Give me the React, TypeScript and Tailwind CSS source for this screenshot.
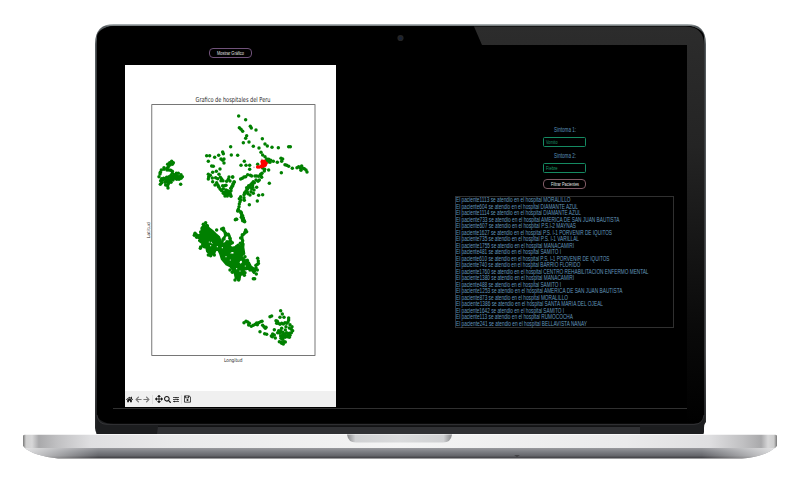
import React from "react";
import { FaHome, FaArrowLeft, FaArrowRight, FaArrowsAlt, FaSearch, FaSlidersH } from "react-icons/fa";
import { FaRegFloppyDisk } from "react-icons/fa6";

const northWest = "257,140 185,167 194,167 190,184 209,172 221,166 233,156 235,161 228,177 237,177 233,181 237,189 200,198 205,199 225,207 203,217 214,214 222,223 190,223 191,231 190,237 196,226 202,234 203,245 212,233 218,236 226,232 230,237 228,242 234,242 215,248 210,255 218,254 222,262 220,258 226,268 230,272 235,266 233,257 243,256 239,257 245,244 250,238 252,231 263,231 255,243 268,246 265,252 263,258 258,265 258,272 254,275 248,272 243,270 238,277 235,280 240,283 245,286 250,280 255,280 240,288 258,289 247,288 243,277 249,283 68,193 74,188 80,184 85,188 82,193 75,195 70,200 66,205 57,203 57,208 49,210 46,217 45,222 42,230 50,236 47,242 53,241 46,253 50,248 60,238 56,235 60,247 62,255 68,257 69,264 66,246 72,245 70,238 65,232 72,230 78,226 82,230 88,230 78,237 84,240 90,235 95,232 100,230 95,238 102,238 108,235 112,230 108,224 100,220 94,220 88,224 94,226 104,230 72,210 77,211 82,214 82,220 107,253 78,247 66,210 76,240 70,251 84,235 78,231 65,240";
const northEast = "26,48 47,59 28,83 33,88 38,94 61,79 64,84 78,90 50,107 47,115 40,128 57,126 97,116 105,132 112,138 70,139 87,144 93,157 98,165 126,142 145,143 176,140 181,140 43,184 33,196 48,196 59,196 59,208 83,193 4,165 23,166 105,170 110,177 107,184 116,185 122,181 130,184 113,182 120,187 116,178 142,187 153,175 158,177 155,184 165,194 170,196 176,199 187,205 201,203 206,200 211,204 215,198 219,205 213,211 223,206 228,210 231,216 154,218 98,204 104,208 116,210 103,213 96,220 92,226 95,232 88,240 84,244 80,228 75,228 65,228 61,226 53,224 47,230 42,231 37,235 32,237 92,223 86,229 78,240 70,245 66,250 62,254 60,260 55,263 52,268 48,273 45,280 42,284 52,276 50,263 56,257 68,255 68,262 72,270 70,280 63,275 60,285 65,266 118,250 80,262 98,284 86,286 82,303 58,314 43,301 44,278 32,290 28,296 30,305 28,312 27,320 25,328 23,333 34,338 35,345 34,352 40,356 43,364 38,362 37,357 16,359 20,358 8,231 12,246 9,252 6,259 3,265 2,285 73,248 54,281 42,293 33,299";
const center = "45,70 43,76 50,82 61,115 68,105 62,111 85,135 92,137 103,135 62,66 110,60 168,28 175,2 182,5 184,10 188,17 190,24 194,35 192,31 233,145 235,153 233,163 228,166 235,160 170,110 165,210 176,210 175,207 220,206 224,206 229,192 197,60 195,68 187,74 182,84 188,92 181,100 157,98 152,93 130,55 125,57 132,62 137,70 145,73 150,85 193,196 195,188 210,180 222,183 232,180 228,173 150,180 157,187 200,65 141,95 132,87 195,140 202,151 77,38 70,43 82,47";
const south = "152,32 157,42 150,52 162,52 176,54 120,50 125,48 42,68 48,64 53,66 58,70 56,75 64,79 70,76 76,73 82,74 80,69 86,68 92,65 96,64 98,76 102,80 106,85 108,82 90,95 104,101 110,103 124,108 128,102 127,110 133,105 136,114 133,89 138,62 142,64 140,70 145,70 150,73 155,70 160,72 165,68 170,70 174,66 176,60 180,74 186,80 188,92 184,88 178,84 168,80 166,90 155,85 152,92 146,92 143,98 150,100 158,97 162,102 170,98 178,100 184,98 180,106 174,104 166,107 160,110 152,108 153,115 158,118 165,112 172,110 178,112 148,125 154,126 160,132 166,126 155,130 162,125 165,102 158,104";
const highlighted = "83,201 88,201 94,200 100,198 97,184 103,184 103,188 108,190 105,196 100,192 97,188 106,192 96,197";

function Dots({ data, x, y, color = "#008000", r = 5.2 }: { data: string; x: number; y: number; color?: string; r?: number }) {
  return (
    <g transform={`translate(${x} ${y}) scale(0.3333)`} fill={color}>
      {data.split(" ").map((p, i) => {
        const [cx, cy] = p.split(",");
        return <circle key={i} cx={cx} cy={cy} r={r} />;
      })}
    </g>
  );
}

function Plot() {
  return (
    <svg className="block h-[326px] w-[211px]" viewBox="125 65 211 326">
      <rect x="151.8" y="104.6" width="163.2" height="250.9" fill="none" stroke="#555" strokeWidth="0.8" />
      <g fontFamily="'DejaVu Sans', sans-serif" fill="#262626">
        <text x="195.5" y="101.9" fontSize="6.9" textLength="75" lengthAdjust="spacingAndGlyphs">Grafico de hospitales del Peru</text>
        <text x="224" y="361.6" fontSize="5.2" textLength="18.5" lengthAdjust="spacingAndGlyphs">Longitud</text>
        <text transform="translate(149.5 238.5) rotate(-90)" fontSize="4.4" textLength="16.5" lengthAdjust="spacingAndGlyphs">Latitud</text>
      </g>
      <Dots data={northWest} x={145} y={100} />
      <Dots data={northEast} x={230} y={100} />
      <g transform="translate(180 210) scale(0.3333)" fill="#008000" stroke="#008000" strokeWidth="8" strokeLinejoin="round">
        <path fillRule="evenodd" d="M48 72 52 80 60 86 58 92 70 101 70 110 80 113 82 124 92 133 101 132 106 120 115 118 121 130 126 147 140 163 151 168 158 178 165 190 168 204 178 207 180 195 190 190 192 178 205 175 215 179 222 188 226 180 212 170 206 158 196 152 182 138 192 131 189 112 190 102 181 112 174 105 166 112 156 114 147 108 153 101 139 99 130 103 122 96 117 82 106 72 98 64 87 56 80 46 70 48 65 55 67 68 56 78Z M87 82 93 92 90 104 102 106 103 101 97 93Z M146 128 158 120 168 129 160 135 150 134Z M159 148 171 148 168 159Z M177 151 186 145 191 157 183 167 174 160Z" />
        <path d="M126 56 135 67 136 78 128 88 127 97M137 73 148 77 151 90 144 99M196 61 192 73 186 78 188 99 181 107" fill="none" />
      </g>
      <Dots data={center} x={180} y={210} />
      <Dots data="88,96 94,97 112,110 138,140 151,150 170,176 180,183 127,113 196,168 92,107" x={180} y={210} color="#fff" r={1.8} />
      <Dots data={south} x={230} y={300} />
      <Dots data="95,178 72,202" x={230} y={100} color="#bbb" r={2.5} />
      <Dots data={highlighted} x={230} y={100} color="#ff0000" r={5.4} />
    </svg>
  );
}

const rows = [
  ["1113", "MORALILLO", 114.5], ["604", "DIAMANTE AZUL", 122], ["1114", "DIAMANTE AZUL", 125],
  ["733", "AMERICA DE SAN JUAN BAUTISTA", 163.5], ["607", "P.S.I-2 MAYNAS", 120], ["1627", "P.S. I-1 PORVENIR DE IQUITOS", 156],
  ["735", "P.S. I-1 VARILLAL", 123], ["1755", "MANACAMIRI", 118], ["481", "SAMITO I", 105],
  ["610", "P.S. I-1 PORVENIR DE IQUITOS", 153.5], ["740", "BARRIO FLORIDO", 124.5], ["1760", "CENTRO REHABILITACION ENFERMO MENTAL", 192.5],
  ["1380", "MANACAMIRI", 118], ["488", "SAMITO I", 105], ["1253", "AMERICA DE SAN JUAN BAUTISTA", 166.5],
  ["873", "MORALILLO", 112], ["1386", "SANTA MARIA DEL OJEAL", 147], ["1642", "SAMITO I", 108],
  ["113", "RUMOCOCHA", 117], ["241", "BELLAVISTA NANAY", 131],
] as const;

function Label({ text, width, size, color }: { text: string; width: number; size: number; color: string }) {
  return (
    <svg width={width} height="8" className="block shrink-0 overflow-visible">
      <text x="0" y={4 + size * 0.36} fontSize={size} fill={color} textLength={width} lengthAdjust="spacingAndGlyphs">{text}</text>
    </svg>
  );
}

function Field({ label, value }: { label: string; value: string }) {
  return (
    <>
      <div className="flex h-[16px] items-center"><Label text={label} width={22} size={7} color="#5b93bd" /></div>
      <div className="flex h-[10px] w-[43px] items-center rounded-[1.5px] border border-[#158a62] pl-[1.5px]">
        <Label text={value} width={11.5} size={5} color="#1b9867" />
      </div>
    </>
  );
}

function Base() {
  return (
    <svg className="block h-[27px] w-[795px]" viewBox="0 433 795 27">
      <defs>
        <linearGradient id="deck" x1="23" x2="777" y1="0" y2="0" gradientUnits="userSpaceOnUse">
          <stop offset="0" stopColor="#777" /><stop offset=".004" stopColor="#d0d0d0" /><stop offset=".012" stopColor="#d7d7d8" />
          <stop offset=".021" stopColor="#a9a9ab" /><stop offset=".045" stopColor="#c0c0c2" /><stop offset=".09" stopColor="#dfdfe1" />
          <stop offset=".2" stopColor="#eaeaeb" /><stop offset=".5" stopColor="#f4f4f4" /><stop offset=".8" stopColor="#eaeaeb" />
          <stop offset=".91" stopColor="#dfdfe1" /><stop offset=".955" stopColor="#c0c0c2" /><stop offset=".979" stopColor="#a9a9ab" />
          <stop offset=".988" stopColor="#d7d7d8" /><stop offset=".996" stopColor="#ccc" /><stop offset="1" stopColor="#777" />
        </linearGradient>
        <linearGradient id="under" x1="0" x2="0" y1="0" y2="1">
          <stop offset="0" stopColor="#a0a1a4" /><stop offset=".35" stopColor="#818388" /><stop offset=".75" stopColor="#65666b" /><stop offset="1" stopColor="#38383c" />
        </linearGradient>
        <linearGradient id="edge" x1="23" x2="777" y1="0" y2="0" gradientUnits="userSpaceOnUse">
          <stop offset="0" stopColor="#fff" stopOpacity=".75" /><stop offset=".1" stopColor="#fff" stopOpacity="0" /><stop offset=".9" stopColor="#fff" stopOpacity="0" /><stop offset="1" stopColor="#fff" stopOpacity=".75" />
        </linearGradient>
        <linearGradient id="notch" x1="0" x2="1" y1="0" y2="0">
          <stop offset="0" stopColor="#88898b" /><stop offset=".08" stopColor="#d0d1d3" /><stop offset=".5" stopColor="#dadbdc" /><stop offset=".92" stopColor="#d0d1d3" /><stop offset="1" stopColor="#88898b" />
        </linearGradient>
      </defs>
      <path d="M24 447H776C768 454 755 458 742 458.5H58C44 457 29 453 24 447Z" fill="url(#under)" />
      <path d="M24 447H776C768 454 755 458 742 458.5H58C44 457 29 453 24 447Z" fill="url(#edge)" />
      <path d="M23 436Q23 434.7 25 434.7H775Q777 434.7 777 436V446L775 448H25L23 446Z" fill="url(#deck)" />
      <path d="M347 434.5H452Q451 442.5 443 442.5H356Q348 442.5 347 434.5Z" fill="url(#notch)" />
      <path d="M514 455.5H520L517 456.5Z" fill="#222" />
    </svg>
  );
}

export default function App() {
  return (
    <div className="flex h-[490px] w-[795px] flex-col overflow-hidden bg-white pt-[24px] font-['Liberation_Sans',Arial,sans-serif]">
      <div className="ml-[95px] grid h-[410px] w-[611px] shrink-0">
        <svg className="col-start-1 row-start-1 h-[410px] w-[611px]" viewBox="95 24 611 410">
          <defs>
            <linearGradient id="glass" x1="0" x2="0" y1="0" y2="1">
              <stop offset="0" stopColor="#2c2c2c" /><stop offset=".3" stopColor="#242424" /><stop offset=".75" stopColor="#0a0a0a" /><stop offset="1" stopColor="#000" />
            </linearGradient>
            <linearGradient id="rim" x1="0" x2="0" y1="0" y2="1">
              <stop offset="0" stopColor="#b9c0c1" /><stop offset=".006" stopColor="#565c5f" /><stop offset=".8" stopColor="#4e5052" /><stop offset="1" stopColor="#202123" />
            </linearGradient>
          </defs>
          <path d="M95 428V44Q95 24 114 24H687Q706 24 706 44V422L704 425V432L703 434H97L95.5 431Z" fill="url(#rim)" />
          <path d="M96.5 434V45Q96.5 26 114 26H687Q704.5 26 704.5 45V422L703.5 434Z" fill="#1c1d1f" />
          <path d="M158 426H640V434H157Z" fill="#303134" />
          <path d="M158 426.3H640" stroke="#0c0c0d" />
          <rect x="97" y="26.5" width="607" height="397.5" rx="17" ry="10" fill="#000" />
          <path d="M97 60V45Q97 26 115 26H686Q704 26 704 45V60Z" fill="#000" />
          <path d="M474 26.5H686Q704 27 704 45V415Q704 424 694 424H687V45H482Z" fill="url(#glass)" />
          <path d="M97 415Q98 424.3 107 424.3H694Q703 424.3 704 415" fill="none" stroke="#3b3b3d" strokeWidth="0.8" />
          <path d="M113 408.5H687" stroke="#353535" strokeWidth="0.9" />
          <circle cx="400.5" cy="38" r="3.1" fill="#242424" />
          <circle cx="400.5" cy="38.2" r="1.5" fill="#17233a" />
        </svg>
        <div className="col-start-1 row-start-1 flex h-[384px] w-[593px] pl-[30px] pt-[24px]">
          <section className="flex w-[211px] flex-col items-center">
            <div className="flex h-[10px] w-[43px] shrink-0 items-center justify-center rounded-[4px] border border-[#70527a]">
              <Label text="Mostrar Gráfico" width={27} size={5.3} color="#e0e0e0" />
            </div>
            <div className="mt-[7px] h-[342px] w-[211px] bg-white">
              <Plot />
              <div className="flex h-[16px] items-center bg-[#f0f0f0] pl-[1px] text-[7px] text-[#161616]">
                <FaHome className="h-[7px] w-[7px]" />
                <FaArrowLeft className="ml-[2px] h-[7px] w-[7px] text-[#777]" />
                <FaArrowRight className="ml-[1px] h-[7px] w-[7px] text-[#777]" />
                <span className="ml-[2px] mr-[2px] h-[9px] w-px bg-[#dcdcdc]" />
                <FaArrowsAlt className="h-[8px] w-[8px]" />
                <FaSearch className="ml-[1px] h-[7px] w-[7px]" />
                <FaSlidersH className="ml-[2px] h-[7px] w-[6px]" />
                <span className="ml-[2px] mr-[2px] h-[9px] w-px bg-[#dcdcdc]" />
                <FaRegFloppyDisk className="h-[8px] w-[7px]" />
              </div>
            </div>
          </section>
          <section className="ml-[119px] flex w-[219px] flex-col items-center pt-[73px]">
            <Field label="Síntoma 1:" value="Vomito" />
            <Field label="Síntoma 2:" value="Fiebre" />
            <div className="mt-[6px] flex h-[10px] w-[43px] shrink-0 items-center justify-center rounded-[4px] border border-[#805b65]">
              <Label text="Filtrar Pacientes" width={28} size={5.4} color="#e4e4e4" />
            </div>
            <div className="mt-[7px] h-[132px] w-[219px] shrink-0 border border-[#303030]">
              {rows.map(([id, place, width], i) => (
                <svg key={i} className="block h-[6.51px] w-[217px] overflow-visible">
                  <text x="0" y="5.4" fontSize="6.9" fill="#6398bf" textLength={width} lengthAdjust="spacingAndGlyphs">{`El paciente${id} se atendio en el hospital ${place}`}</text>
                </svg>
              ))}
            </div>
          </section>
        </div>
      </div>
      <div className="-mt-px shrink-0"><Base /></div>
    </div>
  );
}
